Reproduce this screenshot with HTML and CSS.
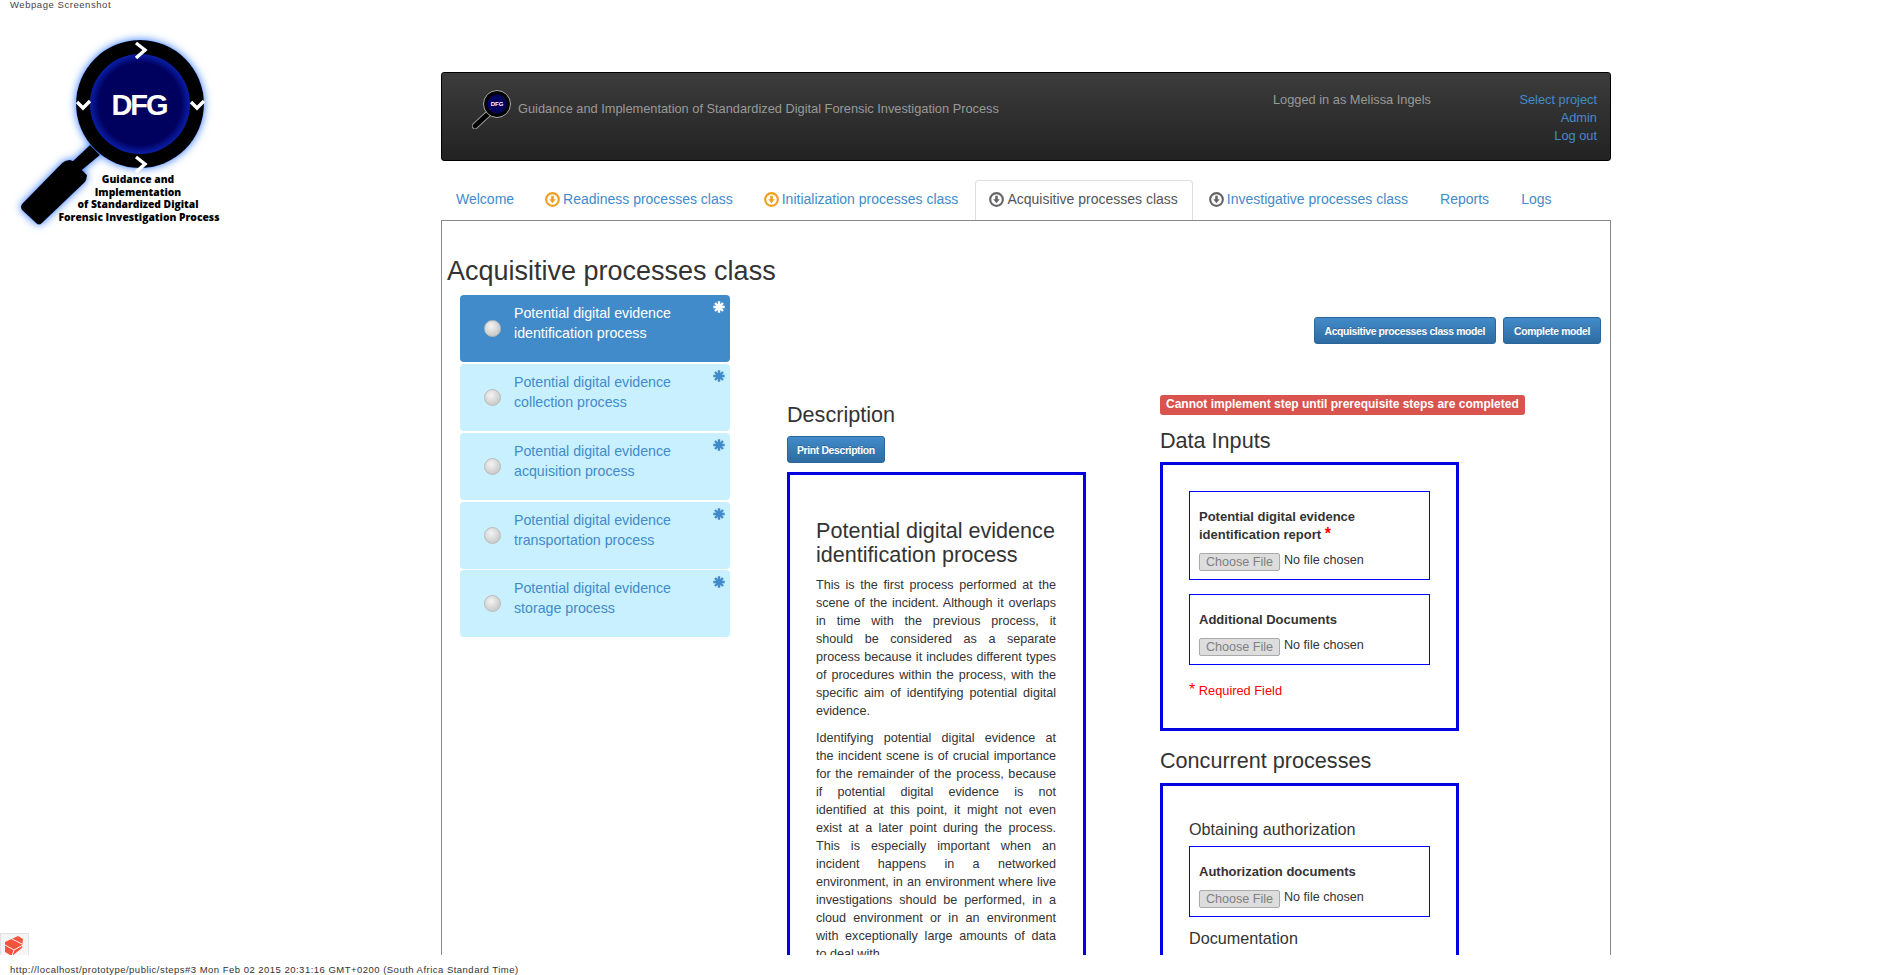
FILE: index.html
```html
<!DOCTYPE html>
<html lang="en">
<head>
  <meta charset="UTF-8">
  <meta name="viewport" content="width=device-width, initial-scale=1.0">
  <title>Webpage Screenshot</title>
  <link rel="stylesheet" href="styles.css">
</head>
<body>
  <svg class="icon-defs" width="0" height="0">
    <defs>
      <symbol id="arrow-circle" viewBox="0 0 14 14">
        <circle cx="7" cy="7" r="5.9" fill="none" stroke="currentColor" stroke-width="2"/>
        <path d="M5.8 3.4h2.4v3.4h1.8L7 10.6 4 6.8h1.8z" fill="currentColor"/>
      </symbol>
      <symbol id="asterisk" viewBox="0 0 12 12">
        <path d="M6 .3v11.4M.3 6h11.4M2 2l8 8M10 2l-8 8" stroke="currentColor" stroke-width="2.4" fill="none"/>
      </symbol>
      <radialGradient id="lens" cx="50%" cy="50%" r="50%">
        <stop offset="82%" stop-color="#00005e"/>
        <stop offset="100%" stop-color="#0a1fa8"/>
      </radialGradient>
      <filter id="glow" x="-25%" y="-25%" width="150%" height="150%">
        <feDropShadow dx="0" dy="0" stdDeviation="4.5" flood-color="#2f74ff"/>
      </filter>
    </defs>
  </svg>

  <div class="sheet">
    <aside class="left-rail">
      <p class="caption">Webpage Screenshot</p>
      <svg class="logo" viewBox="0 0 240 220" width="240" height="220">
        <g filter="url(#glow)">
          <path d="M90 127l10 10-18 15 5 5q0 5-3 8l-42 40q-3 3-6 0l-14-13q-2-3 0-6l40-41q6-5 11-2z" fill="#000"/>
          <circle cx="140" cy="86" r="64" fill="#000"/>
        </g>
        <circle cx="140" cy="86" r="50" fill="url(#lens)"/>
        <path d="M136 25l9 7-9 8M136 139l9 7-9 8M77 84l6 6 7-7M191 84l6 6 7-7" fill="none" stroke="#fff" stroke-width="3.4"/>
        <text class="logo-mark" x="139" y="97">DFG</text>
        <text class="logo-words" x="138" y="165">Guidance and</text>
        <text class="logo-words" x="138" y="178">Implementation</text>
        <text class="logo-words" x="138" y="190">of Standardized Digital</text>
        <text class="logo-words" x="139" y="203">Forensic Investigation Process</text>
      </svg>
      <div class="debug-tab">
        <svg viewBox="0 0 18 20" width="18" height="20">
          <path d="M0 6L13 0l5 3-1 9-10 8-7-4z" fill="#f4533d"/>
          <path d="M0 9l9 5 9-5M9 14l-2 6M7 3l10 5" stroke="#f5f5f5" stroke-width="1" fill="none"/>
        </svg>
      </div>
    </aside>

    <div class="content">
      <header class="topbar">
        <div class="brand">
          <svg class="brand-logo" viewBox="0 0 40 40" width="40" height="40">
            <path d="M16 25L3 37" stroke="#999" stroke-width="6.5" stroke-linecap="round"/>
            <path d="M16 25L3 37" stroke="#000" stroke-width="4.5" stroke-linecap="round"/>
            <circle cx="25" cy="15" r="13.5" fill="#000" stroke="#aaa" stroke-width="1"/>
            <circle cx="25" cy="15" r="9.5" fill="#00005e"/>
            <text class="brand-mark" x="25" y="17">DFG</text>
          </svg>
          <span>Guidance and Implementation of Standardized Digital Forensic Investigation Process</span>
        </div>
        <div class="user">Logged in as Melissa Ingels</div>
        <nav class="user-links">
          <a href="#">Select project</a>
          <a href="#">Admin</a>
          <a href="#">Log out</a>
        </nav>
      </header>

      <ul class="tabs">
        <li><a href="#">Welcome</a></li>
        <li><a href="#"><svg class="tab-icon warn"><use href="#arrow-circle"/></svg>Readiness processes class</a></li>
        <li><a href="#"><svg class="tab-icon warn"><use href="#arrow-circle"/></svg>Initialization processes class</a></li>
        <li class="active"><a href="#"><svg class="tab-icon idle"><use href="#arrow-circle"/></svg>Acquisitive processes class</a></li>
        <li><a href="#"><svg class="tab-icon idle"><use href="#arrow-circle"/></svg>Investigative processes class</a></li>
        <li><a href="#">Reports</a></li>
        <li><a href="#">Logs</a></li>
      </ul>

      <main class="panel">
        <h1>Acquisitive processes class</h1>
        <div class="panel-body">
          <ul class="steps">
            <li class="step current">
              <span class="radio"></span>
              <a href="#">Potential digital evidence identification process</a>
              <svg class="star"><use href="#asterisk"/></svg>
            </li>
            <li class="step">
              <span class="radio"></span>
              <a href="#">Potential digital evidence collection process</a>
              <svg class="star"><use href="#asterisk"/></svg>
            </li>
            <li class="step">
              <span class="radio"></span>
              <a href="#">Potential digital evidence acquisition process</a>
              <svg class="star"><use href="#asterisk"/></svg>
            </li>
            <li class="step">
              <span class="radio"></span>
              <a href="#">Potential digital evidence transportation process</a>
              <svg class="star"><use href="#asterisk"/></svg>
            </li>
            <li class="step">
              <span class="radio"></span>
              <a href="#">Potential digital evidence storage process</a>
              <svg class="star"><use href="#asterisk"/></svg>
            </li>
          </ul>

          <div class="detail">
            <div class="model-buttons">
              <button type="button" class="btn">Acquisitive processes class model</button>
              <button type="button" class="btn">Complete model</button>
            </div>
            <div class="columns">
              <section class="col-description">
                <h3>Description</h3>
                <button type="button" class="btn print-btn">Print Description</button>
                <div class="box description-box">
                  <h2>Potential digital evidence identification process</h2>
                  <p>This is the first process performed at the<br>
                    scene of the incident. Although it overlaps<br>
                    in time with the previous process, it<br>
                    should be considered as a separate<br>
                    process because it includes different types<br>
                    of procedures within the process, with the<br>
                    specific aim of identifying potential digital<br>
                    evidence.</p>
                  <p>Identifying potential digital evidence at<br>
                    the incident scene is of crucial importance<br>
                    for the remainder of the process, because<br>
                    if potential digital evidence is not<br>
                    identified at this point, it might not even<br>
                    exist at a later point during the process.<br>
                    This is especially important when an<br>
                    incident happens in a networked<br>
                    environment, in an environment where live<br>
                    investigations should be performed, in a<br>
                    cloud environment or in an environment<br>
                    with exceptionally large amounts of data<br>
                    <span class="last-line">to deal with.</span></p>
                </div>
              </section>

              <section class="col-inputs">
                <span class="alert-label">Cannot implement step until prerequisite steps are completed</span>
                <h3 class="inputs-title">Data Inputs</h3>
                <div class="box inputs-box">
                  <div class="field">
                    <label>Potential digital evidence identification report <span class="req">*</span></label>
                    <input type="file" disabled>
                  </div>
                  <div class="field">
                    <label>Additional Documents</label>
                    <input type="file" disabled>
                  </div>
                  <p class="req-note"><span class="req">*</span> Required Field</p>
                </div>

                <h3 class="concurrent-title">Concurrent processes</h3>
                <div class="box inputs-box">
                  <h4>Obtaining authorization</h4>
                  <div class="field">
                    <label>Authorization documents</label>
                    <input type="file" disabled>
                  </div>
                  <h4 class="doc-title">Documentation</h4>
                </div>
              </section>
            </div>
          </div>
        </div>
      </main>
    </div>
  </div>

  <footer class="print-line">http://localhost/prototype/public/steps#3 Mon Feb 02 2015 20:31:16 GMT+0200 (South Africa Standard Time)</footer>
</body>
</html>
```

FILE: styles.css
```css
* {
  box-sizing: border-box;
  margin: 0;
  padding: 0;
}

html, body {
  height: 975px;
  overflow: hidden;
}

body {
  font-family: 'Liberation Sans', Arial, sans-serif;
  font-size: 12.6px;
  line-height: 18px;
  color: #333;
  background: #fff;
}

a {
  color: #428bca;
  text-decoration: none;
}

ul {
  list-style: none;
}

.icon-defs {
  display: block;
  height: 0;
}

.sheet {
  display: flex;
  height: 955px;
  overflow: hidden;
}

/* left rail with the logo */
.left-rail {
  width: 441px;
  flex: none;
  display: flex;
  flex-direction: column;
  align-items: flex-start;
}

.caption {
  font-size: 9.5px;
  line-height: 10px;
  letter-spacing: 0.55px;
  color: #444;
  padding-left: 10px;
}

.logo {
  margin-top: 8px;
}

.logo-mark {
  font-family: 'Liberation Sans', Arial, sans-serif;
  font-weight: bold;
  font-size: 29px;
  letter-spacing: -2px;
  fill: #fff;
  text-anchor: middle;
}

.logo-words {
  font-family: 'Open Sans', sans-serif;
  font-weight: 800;
  font-size: 10.3px;
  fill: #000;
  text-anchor: middle;
}

.debug-tab {
  margin-top: auto;
  width: 29px;
  height: 22px;
  padding: 2px 0 0 4px;
  background: #f5f5f5;
  border: 1px solid #e2e2e2;
  border-bottom: 0;
  overflow: hidden;
}

/* header bar */
.content {
  width: 1170px;
  flex: none;
  padding-top: 72px;
}

.topbar {
  height: 89px;
  display: flex;
  background: linear-gradient(#3c3c3c, #222);
  border: 1px solid #000;
  border-radius: 3px;
  color: #999;
  padding: 18px 13px 0 30px;
}

.brand {
  display: flex;
  align-items: flex-start;
  width: 801px;
  font-size: 12.8px;
}

.brand-logo {
  margin-top: -2px;
  flex: none;
}

.brand span {
  margin-top: 9px;
  margin-left: 6px;
}

.brand-mark {
  font-family: 'Liberation Sans', Arial, sans-serif;
  font-weight: bold;
  font-size: 6px;
  fill: #fff;
  text-anchor: middle;
}

.user {
  width: 200px;
  font-size: 12.8px;
}

.user-links {
  flex: 1;
  display: flex;
  flex-direction: column;
  align-items: flex-end;
  font-size: 12.8px;
}

/* tabs */
.tabs {
  display: flex;
  height: 40px;
  margin-top: 19px;
  font-size: 14px;
}

.tabs li {
  margin-right: 2px;
  border: 1px solid transparent;
  border-bottom: 0;
  border-radius: 4px 4px 0 0;
}

.tabs a {
  display: flex;
  align-items: center;
  height: 36px;
  padding: 0 14px;
  white-space: nowrap;
}

.tabs .active {
  border-color: #ddd;
}

.tabs .active a {
  color: #555;
}

.tab-icon {
  width: 15px;
  height: 15px;
  margin-left: -1px;
  margin-right: 3px;
}

.warn {
  color: #f0a020;
}

.idle {
  color: #666;
}

/* main panel */
.panel {
  height: 735px;
  border: 1px solid #888;
  border-bottom: 0;
  overflow: hidden;
}

h1 {
  font-size: 27px;
  font-weight: normal;
  line-height: 30px;
  margin: 35px 0 9px 5px;
}

h3 {
  font-size: 21.6px;
  font-weight: normal;
  line-height: 24px;
}

.panel-body {
  display: flex;
  align-items: flex-start;
  padding-left: 18px;
}

/* process list */
.steps {
  width: 270px;
  flex: none;
}

.step {
  display: flex;
  height: 67px;
  margin-bottom: 2px;
  padding: 8px 5px 0 24px;
  background: #c9f0ff;
  border-radius: 4px;
  font-size: 14.2px;
  line-height: 20px;
}

.step:last-child {
  margin-top: -1px;
}

.step a {
  flex: 1;
  padding-right: 16px;
}

.step.current {
  background: #428bca;
}

.step.current a {
  color: #fff;
}

.radio {
  flex: none;
  width: 17px;
  height: 17px;
  margin: 17px 13px 0 0;
  border: 1px solid #bbb;
  border-radius: 50%;
  background: radial-gradient(circle at 40% 35%, #f4f4f4, #ccc 70%);
}

.star {
  flex: none;
  width: 12px;
  height: 12px;
  color: #428bca;
  margin-top: -2px;
}

.current .star {
  color: #fff;
}

/* right hand side */
.detail {
  flex: 1;
  padding: 22px 9px 0 0;
}

.model-buttons {
  display: flex;
  justify-content: flex-end;
  gap: 7px;
}

.btn {
  height: 27px;
  padding: 1px 10px 0;
  font-family: inherit;
  font-size: 10.4px;
  font-weight: bold;
  letter-spacing: -0.35px;
  color: #fff;
  background: linear-gradient(#428bca, #2d6ca2);
  border: 1px solid #2b669a;
  border-radius: 3px;
  text-shadow: 0 -1px 0 rgba(0, 0, 0, 0.2);
}

.columns {
  display: flex;
  align-items: flex-start;
  margin-left: 57px;
  margin-top: 51px;
}

.col-description {
  width: 299px;
  margin-top: 8px;
  margin-right: 74px;
  flex: none;
}

.print-btn {
  display: block;
  margin: 9px 0;
  padding: 1px 9px 0;
}

.box {
  border: 3px solid #0000e0;
}

.description-box {
  padding: 44px 27px 0 26px;
}

.description-box h2 {
  font-size: 21.6px;
  font-weight: normal;
  line-height: 24px;
  margin-bottom: 9px;
}

.description-box p {
  margin-bottom: 9px;
  text-align: justify;
  text-align-last: justify;
  white-space: nowrap;
}

.last-line {
  display: block;
  text-align-last: left;
}

.col-inputs {
  width: 365px;
}

.alert-label {
  display: block;
  height: 20px;
  padding: 0 6px;
  background: #d9534f;
  border-radius: 3px;
  color: #fff;
  font-size: 12px;
  font-weight: bold;
  line-height: 19px;
  white-space: nowrap;
}

.inputs-title {
  margin: 14px 0 9px;
}

.concurrent-title {
  margin: 18px 0 10px;
}

.inputs-box {
  width: 299px;
  padding: 26px 26px 0;
}

.inputs-box > .field + .field {
  margin-top: 14px;
}

.field {
  border: 1px solid #0000ff;
  padding: 16px 9px 8px;
}

.field label {
  display: block;
  font-size: 13px;
  font-weight: bold;
  margin-bottom: 9px;
}

.req {
  color: #f00;
  font-size: 16px;
  line-height: 1;
}

.req-note {
  color: #f00;
  font-size: 12.8px;
  margin-top: 17px;
  height: 46px;
}

input[type="file"] {
  display: block;
  width: 200px;
  height: 20px;
  margin-top: -2px;
  font-family: inherit;
  font-size: 12.6px;
  line-height: 18px;
  color: #333;
}

input[type="file"]::file-selector-button {
  width: 81px;
  height: 18px;
  margin-right: 4px;
  padding: 0;
  font-family: inherit;
  font-size: 12.6px;
  color: #808080;
  background: #ddd;
  border: 1px solid #aaa;
  border-radius: 2px;
  vertical-align: -2px;
}

h4 {
  font-size: 16.2px;
  font-weight: normal;
  line-height: 18px;
  margin: 8px 0;
}

.doc-title {
  margin-top: 12px;
}

.print-line {
  height: 20px;
  padding-left: 10px;
  font-size: 9.5px;
  line-height: 30px;
  letter-spacing: 0.48px;
  color: #333;
}
```
